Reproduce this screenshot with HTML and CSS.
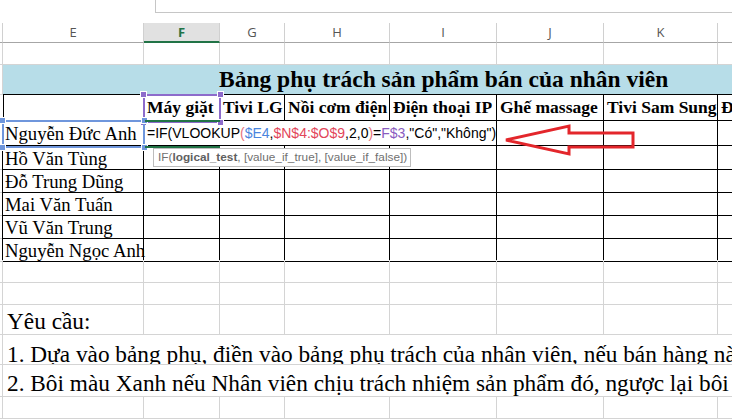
FILE: index.html
```html
<!DOCTYPE html>
<html lang="vi">
<head>
<meta charset="utf-8">
<title>Bảng phụ trách</title>
<link rel="stylesheet" href="styles.css">
</head>
<body>
<div class="topbar"><div class="fx"></div></div>

<div class="row hdr">
  <div class="c0"></div>
  <div>E</div><div class="on">F</div><div>G</div><div>H</div><div>I</div><div>J</div><div>K</div><div></div>
</div>

<div class="row r22">
  <div class="c0"></div><div></div><div></div><div></div><div></div><div></div><div></div><div></div><div></div>
</div>

<div class="row r30 title-row">
  <div class="c0"></div>
  <div class="title">Bảng phụ trách sản phẩm bán của nhân viên</div>
</div>

<div class="row r26 tb head">
  <div class="c0"></div>
  <div></div><div>Máy giặt</div><div>Tivi LG</div><div>Nồi cơm điện</div><div>Điện thoại IP</div><div>Ghế massage</div><div>Tivi Sam Sung</div><div>Đ</div>
</div>

<div class="row r25 tb">
  <div class="c0"></div>
  <div class="name">Nguyễn Đức Anh</div>
  <div class="edit"><span class="k">=IF(VLOOKUP</span><span class="p">(</span><span class="b">$E4</span>,<span class="r">$N$4:$O$9</span>,2,0<span class="p">)</span>=<span class="v">F$3</span>,"Có","Không")</div>
  <div></div><div></div><div></div>
</div>

<div class="row r23 tb">
  <div class="c0"></div><div class="name">Hồ Văn Tùng</div><div></div><div></div><div></div><div></div><div></div><div></div><div></div>
</div>
<div class="row r23 tb">
  <div class="c0"></div><div class="name">Đỗ Trung Dũng</div><div></div><div></div><div></div><div></div><div></div><div></div><div></div>
</div>
<div class="row r23 tb">
  <div class="c0"></div><div class="name">Mai Văn Tuấn</div><div></div><div></div><div></div><div></div><div></div><div></div><div></div>
</div>
<div class="row r23 tb">
  <div class="c0"></div><div class="name">Vũ Văn Trung</div><div></div><div></div><div></div><div></div><div></div><div></div><div></div>
</div>
<div class="row r22 tb">
  <div class="c0"></div><div class="name">Nguyễn Ngọc Anh</div><div></div><div></div><div></div><div></div><div></div><div></div><div></div>
</div>

<div class="row r23">
  <div class="c0"></div><div></div><div></div><div></div><div></div><div></div><div></div><div></div><div></div>
</div>
<div class="row r22">
  <div class="c0"></div><div></div><div></div><div></div><div></div><div></div><div></div><div></div><div></div>
</div>
<div class="row r30">
  <div class="c0"></div><div class="note">Yêu cầu:</div><div></div><div></div><div></div><div></div><div></div><div></div><div></div>
</div>
<div class="row r30">
  <div class="c0"></div><div class="note wide">1. Dựa vào bảng phụ, điền vào bảng phụ trách của nhân viên, nếu bán hàng nào thì điền "Có", ngược lại điền "Không"</div>
</div>
<div class="row r32">
  <div class="c0"></div><div class="note wide">2. Bôi màu Xanh nếu Nhân viên chịu trách nhiệm sản phẩm đó, ngược lại bôi màu Đỏ</div>
</div>
<div class="row r22">
  <div class="c0"></div><div></div><div></div><div></div><div></div><div></div><div></div><div></div><div></div>
</div>

<div class="sel sel-f4"><i class="h tl"></i><i class="h tr"></i><i class="h bl"></i><i class="h br"></i></div>
<div class="sel sel-e5"><i class="h tl"></i><i class="h tr"></i><i class="h bl"></i><i class="h br"></i></div>
<div class="active"></div>

<div class="tip">IF(<b>logical_test</b>, [value_if_true], [value_if_false])</div>

<svg class="arrow" width="140" height="40" viewBox="500 120 140 40">
  <polygon points="506,140 569,126 569,133 633,133 633,147 569,147 569,154" fill="none" stroke="#e3262b" stroke-width="3" stroke-linejoin="miter"/>
</svg>
</body>
</html>
```
FILE: styles.css
```css
* { box-sizing: border-box; margin: 0; padding: 0; }
html, body { width: 732px; height: 419px; overflow: hidden; background: #fff; }
body { position: relative; font-family: "Liberation Serif", "Times New Roman", serif; color: #000; }

.topbar { height: 23px; }
.fx { margin-left: 155px; height: 13px; border-left: 1px solid #c6c6c6; border-bottom: 1px solid #c6c6c6; }

.row {
  display: grid;
  grid-template-columns: 3px 141px 76px 65px 105px 107px 107px 114px 60px;
  width: 778px;
}
.row > div {
  border-right: 1px solid #d4d4d4;
  border-bottom: 1px solid #d4d4d4;
  overflow: hidden;
  white-space: nowrap;
}

.r22 { height: 22px; }
.r23 { height: 23px; }
.r25 { height: 25px; }
.r26 { height: 26px; }
.r30 { height: 30px; }
.r32 { height: 32px; }

/* column headers */
.hdr { height: 20px; }
.hdr > div {
  font-family: "Open Sans", "DejaVu Sans", sans-serif;
  font-size: 13px;
  color: #555;
  text-align: center;
  line-height: 19px;
  border-right-color: #d0d0d0;
  border-bottom-color: #a6a6a6;
}
.hdr > .on {
  background: #e1e1e1;
  color: #217346;
  font-weight: bold;
  border-bottom: 2px solid #217346;
}

/* title */
.title-row > .title {
  grid-column: 2 / -1;
  background: #b7dde8;
  border-bottom-color: #000;
  border-right: none;
  font-weight: bold;
  font-size: 23.5px;
  line-height: 29px;
  padding-left: 216px;
}

/* bordered table */
.tb > div { border-right-color: #000; border-bottom-color: #000; }
.tb > .c0 { border-bottom-color: #d4d4d4; }
.head > div {
  font-weight: bold;
  font-size: 17.5px;
  line-height: 25px;
  padding-left: 3px;
}
.tb > .name {
  font-size: 18.7px;
  line-height: 20px;
  padding-left: 2px;
  padding-top: 3px;
  overflow: visible;
}
.r25 > .name { line-height: 22px; padding-top: 2px; }

.edit {
  grid-column: 3 / 7;
  background: #fff;
  font-family: "Liberation Sans", Arial, sans-serif;
  font-size: 14px;
  line-height: 24px;
  padding-left: 3px;
  color: #000;
}
.edit .p { color: #e8727a; }
.edit .b { color: #4a85de; }
.edit .r { color: #e2465a; }
.edit .v { color: #8a5cc0; }

/* notes */
.note {
  font-size: 23.3px;
  line-height: 27px;
  padding-left: 4px;
  padding-top: 3px;
}
.note.wide { grid-column: 2 / -1; border-right: none; padding-top: 6px; }
.r32 .note { padding-top: 5px; }

/* overlays */
.sel { position: absolute; border: 2px solid; }
.sel-f4 { left: 143px; top: 94px; width: 78px; height: 29px; border-color: #8d6bcb; color: #8d6bcb; }
.sel-e5 { left: 2px; top: 120px; width: 143px; height: 28px; border-color: #6f96dc; color: #6f96dc; }
.h { position: absolute; width: 5px; height: 5px; background: currentColor; border: 1px solid #fff; box-sizing: content-box; }
.tl { left: -5px; top: -5px; }
.tr { right: -5px; top: -5px; }
.bl { left: -5px; bottom: -5px; }
.br { right: -5px; bottom: -5px; }

.active {
  position: absolute;
  left: 145px; top: 120px; width: 75px; height: 28px;
  border-top: 2px solid #217346;
  border-bottom: 2px solid #217346;
}

.tip {
  position: absolute;
  left: 153px; top: 148px; width: 258px; height: 19px;
  background: #fff;
  border: 1px solid #bdbdbd;
  font-family: "Liberation Sans", Arial, sans-serif;
  font-size: 11.8px;
  line-height: 17px;
  color: #707070;
  padding-left: 4px;
  white-space: nowrap;
}
.tip b { color: #606060; }

.arrow { position: absolute; left: 500px; top: 120px; }
```
